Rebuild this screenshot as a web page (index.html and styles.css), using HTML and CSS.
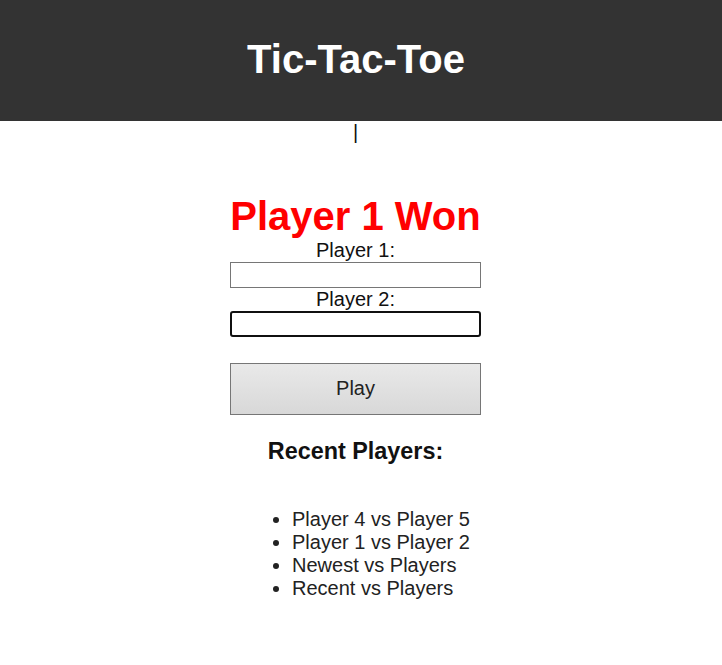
FILE: index.html
```html
<!DOCTYPE html>
<html>
<head>
<meta charset="utf-8">
<link rel="stylesheet" href="styles.css">
</head>
<body>
<header class="top">
  <h1 class="title">Tic-Tac-Toe</h1>
</header>
<div class="page">
<main class="main">
  <div class="board">|</div>
  <h2 class="result">Player 1 Won</h2>
  <form class="form">
    <label class="label" for="p1">Player 1:</label>
    <input class="field" id="p1" type="text">
    <label class="label" for="p2">Player 2:</label>
    <input class="field field-focus" id="p2" type="text">
    <button class="play" type="button">Play</button>
  </form>
  <h3 class="recent">Recent Players:</h3>
  <ul class="list">
    <li>Player 4 vs Player 5</li>
    <li>Player 1 vs Player 2</li>
    <li>Newest vs Players</li>
    <li>Recent vs Players</li>
  </ul>
</main>
</div>
</body>
</html>
```
FILE: styles.css
```css
html, body {
  margin: 0;
  padding: 0;
  background: #fff;
}
body {
  font-family: "Liberation Sans", Arial, sans-serif;
  font-size: 20px;
  color: #111;
}
.top {
  box-sizing: border-box;
  background: #333333;
  height: 121px;
  padding-right: 10px;
  display: flex;
  align-items: center;
  justify-content: center;
}
.title {
  margin: 0;
  color: #fff;
  font-size: 40px;
  font-weight: bold;
  line-height: 1;
  padding-bottom: 3px;
}
.page {
  padding-right: 11px;
}
.main {
  width: 251px;
  margin: 0 auto;
  display: flex;
  flex-direction: column;
  align-items: stretch;
  text-align: center;
}
.board {
  line-height: 23px;
  color: #111;
}
.result {
  margin: 49px 0 0;
  color: #ff0000;
  font-size: 40px;
  font-weight: bold;
  line-height: 46px;
}
.form {
  display: flex;
  flex-direction: column;
}
.label {
  line-height: 23px;
  color: #111;
}
.field {
  box-sizing: border-box;
  width: 251px;
  height: 26px;
  margin: 0;
  border: 1px solid #767676;
  border-radius: 0;
  padding: 1px 2px;
  font: inherit;
  background: #fff;
}
.field-focus {
  border: 2px solid #101010;
  border-radius: 3px;
  outline: none;
}
.play {
  box-sizing: border-box;
  margin-top: 26px;
  width: 251px;
  height: 52px;
  border: 1px solid #767676;
  border-radius: 0;
  background: linear-gradient(#e9e9e9, #d8d8d8);
  font-family: inherit;
  font-size: 20px;
  color: #222;
  padding: 0 0 2px;
}
.recent {
  margin: 23px 0 0;
  font-size: 23.4px;
  font-weight: bold;
  line-height: 27px;
  color: #111;
}
.list {
  margin: 43px 0 0;
  padding: 0 0 0 62px;
  text-align: left;
  color: #222;
  line-height: 23px;
}
```
